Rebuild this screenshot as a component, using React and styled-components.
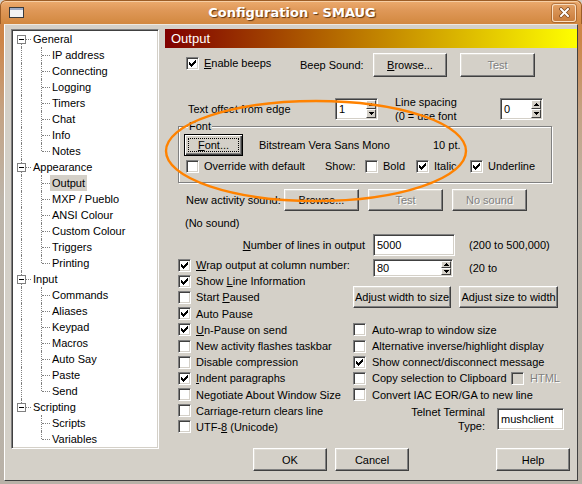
import React from 'react';
import styled, { createGlobalStyle, css } from 'styled-components';

const GlobalStyle = createGlobalStyle`
  html, body { margin: 0; padding: 0; background: #d4d0c8; }
  body { width: 582px; height: 484px; overflow: hidden; }
  * { box-sizing: border-box; }
`;

const FACE = '#d4d0c8';

const Window = styled.div`
  position: relative;
  width: 582px;
  height: 484px;
  display: flex;
  flex-direction: column;
  background: linear-gradient(to bottom, #d08444 0, #cd8547 40px, #c4a283 110px, #bdb5aa 200px, #b9b2a8 100%);
  border-radius: 6px 6px 0 0;
  overflow: hidden;
  font-family: "Liberation Sans", Arial, sans-serif;
  font-size: 11px;
  color: #000;
`;

const TitleBar = styled.div`
  height: 24px;
  flex-shrink: 0;
  display: flex;
  align-items: center;
  padding: 0 5px 0 8px;
  background: linear-gradient(to bottom, #ecab6e 0%, #df9858 40%, #d2883f 100%);
  border-radius: 6px 6px 0 0;
  border: 1px solid #9c5d26;
  border-bottom: none;
  box-shadow: inset 0 1px 0 rgba(255, 230, 200, 0.6);
`;

const TitleText = styled.div`
  flex: 1;
  text-align: center;
  padding-left: 8px;
  font-family: "DejaVu Sans", sans-serif;
  font-weight: bold;
  font-size: 13px;
  color: #fff;
  text-shadow: 1px 1px 1px rgba(70, 35, 5, 0.85);
`;

const CloseButton = styled.div`
  width: 24px;
  height: 18px;
  border-radius: 3px;
  border: 1px solid rgba(255, 236, 214, 0.85);
  box-shadow: 0 0 0 1px rgba(130, 70, 25, 0.5);
  background: linear-gradient(to bottom, #e19f63, #c97d3c);
  display: flex;
  align-items: center;
  justify-content: center;
`;

const Client = styled.div`
  flex: 1;
  margin: 0 4px 3px 4px;
  background: ${FACE};
  border-top: 1px solid #efe9e0;
  border-left: 1px solid #fff;
  border-right: 1px solid #404040;
  border-bottom: 1px solid #404040;
  display: flex;
  align-items: flex-start;
  gap: 6px;
  padding: 4px 0 0 6px;
`;

/* ---------- tree ---------- */

const Tree = styled.div`
  width: 148px;
  height: 420px;
  flex-shrink: 0;
  background: #fff;
  border: 1px solid;
  border-color: #808080 #fff #fff #808080;
  box-shadow: inset 1px 1px 0 #404040, inset -1px -1px 0 ${FACE};
  padding: 1px 0 0 1px;
`;

const TreeRow = styled.div`
  display: flex;
  height: 16px;
`;

const RootCell = styled.div`
  width: 18px;
  flex-shrink: 0;
  display: flex;
  flex-direction: column;
`;

const VSeg = styled.div`
  margin-left: 8px;
  width: 0;
  height: ${(p) => p.$h}px;
  border-left: 1px ${(p) => (p.$on ? 'dotted #808080' : 'solid transparent')};
`;

const BoxLine = styled.div`
  display: flex;
  align-items: center;
  height: 9px;
`;

const ExpandBox = styled.div`
  width: 9px;
  height: 9px;
  margin-left: 4px;
  border: 1px solid #808080;
  background: #fff;
  display: flex;
  align-items: center;
  justify-content: center;
`;

const Minus = styled.span`
  width: 5px;
  height: 1px;
  background: #000;
`;

const HSeg = styled.div`
  width: ${(p) => p.$w}px;
  height: 0;
  border-top: 1px dotted #808080;
`;

const ChildCell = styled.div`
  width: 19px;
  flex-shrink: 0;
  display: flex;
  align-items: flex-start;
`;

const VLine = styled.div`
  margin-left: 10px;
  width: 0;
  height: ${(p) => p.$h}px;
  border-left: 1px dotted #808080;
`;

const HLine = styled.div`
  width: 8px;
  height: 0;
  margin-top: 8px;
  border-top: 1px dotted #808080;
`;

const NodeLabel = styled.span`
  height: 16px;
  line-height: 16px;
  padding: 0 2px;
  white-space: nowrap;
  background: ${(p) => (p.$selected ? FACE : 'transparent')};
`;

/* ---------- right panel ---------- */

const Panel = styled.div`
  flex: 1;
  min-width: 0;
  display: flex;
  flex-direction: column;
`;

const Header = styled.div`
  height: 19px;
  flex-shrink: 0;
  background: linear-gradient(to right, #800000, #ffff00);
  color: #fff;
  font-size: 13px;
  line-height: 19px;
  padding-left: 6px;
`;

const Line = styled.div`
  display: flex;
  align-items: center;
  flex-shrink: 0;
  height: ${(p) => p.$h}px;
  margin-top: ${(p) => p.$mt || 0}px;
`;

const Label = styled.span`
  display: block;
  flex-shrink: 0;
  white-space: nowrap;
  line-height: 14px;
  margin-left: ${(p) => p.$ml || 0}px;
  width: ${(p) => (p.$w ? `${p.$w}px` : 'auto')};
  text-align: ${(p) => p.$align || 'left'};
  padding-right: ${(p) => p.$pr || 0}px;
  color: ${(p) => (p.$disabled ? '#808080' : '#000')};
  ${(p) => p.$disabled && css`text-shadow: 1px 1px 0 #fff;`}
`;

const Btn = styled.button`
  flex-shrink: 0;
  width: ${(p) => p.$w}px;
  height: ${(p) => p.$h || 23}px;
  margin-left: ${(p) => p.$ml || 0}px;
  padding: 0;
  font-family: "Liberation Sans", Arial, sans-serif;
  font-size: 11px;
  color: #000;
  background: ${FACE};
  border: 1px solid;
  border-color: #fff #404040 #404040 #fff;
  box-shadow: inset -1px -1px 0 #808080, inset 1px 1px 0 #dfdcd5;
  display: flex;
  align-items: center;
  justify-content: center;
  white-space: nowrap;
  ${(p) =>
    p.disabled &&
    css`
      color: #808080;
      text-shadow: 1px 1px 0 #fff;
    `}
  ${(p) =>
    p.$default &&
    css`
      border: 1px solid #000;
      box-shadow: inset 1px 1px 0 #fff, inset -1px -1px 0 #404040, inset -2px -2px 0 #808080;
    `}
`;

const Focus = styled.span`
  flex: 1;
  align-self: stretch;
  margin: 3px;
  border: 1px dotted #000;
  display: flex;
  align-items: center;
  justify-content: center;
`;

const CheckItem = styled.span`
  display: flex;
  align-items: center;
  flex-shrink: 0;
  white-space: nowrap;
  gap: ${(p) => (p.$gap == null ? 5 : p.$gap)}px;
  margin-left: ${(p) => p.$ml || 0}px;
  margin-top: ${(p) => p.$dy || 0}px;
  width: ${(p) => (p.$w ? `${p.$w}px` : 'auto')};
  color: ${(p) => (p.$disabled ? '#808080' : '#000')};
  ${(p) => p.$disabled && css`text-shadow: 1px 1px 0 #fff;`}
`;

const Box = styled.span`
  width: 13px;
  height: 13px;
  flex-shrink: 0;
  display: flex;
  align-items: center;
  justify-content: center;
  background: ${(p) => (p.$disabled ? FACE : '#fff')};
  border: 1px solid;
  border-color: #808080 #fff #fff #808080;
  box-shadow: inset 1px 1px 0 #404040, inset -1px -1px 0 ${FACE};
`;

const Field = styled.div`
  flex-shrink: 0;
  display: flex;
  width: ${(p) => p.$w}px;
  height: ${(p) => p.$h || 22}px;
  margin-left: ${(p) => p.$ml || 0}px;
  background: #fff;
  border: 1px solid;
  border-color: #808080 #fff #fff #808080;
  box-shadow: inset 1px 1px 0 #404040, inset -1px -1px 0 ${FACE};
`;

const FieldText = styled.span`
  flex: 1;
  align-self: center;
  padding-left: 3px;
  line-height: 14px;
  white-space: nowrap;
`;

const SpinButtons = styled.div`
  width: 10px;
  margin: 1px 1px 1px 0;
  display: flex;
  flex-direction: column;
`;

const SpinButton = styled.div`
  flex: 1;
  background: ${FACE};
  border: 1px solid;
  border-color: #fff #404040 #404040 #fff;
  display: flex;
  align-items: center;
  justify-content: center;
`;

const Group = styled.fieldset`
  flex-shrink: 0;
  margin: 0 0 0 13px;
  width: 374px;
  min-width: 0;
  padding: 1px 0 9px 5px;
  border: 1px solid #808080;
  box-shadow: inset 1px 1px 0 #fff, 1px 1px 0 #fff;
`;

const GroupLegend = styled.legend`
  margin-left: 4px;
  padding: 0 1px;
  line-height: 13px;
  font-size: 11px;
  background: ${FACE};
`;

const OptionsGrid = styled.div`
  flex-shrink: 0;
  margin-top: 1px;
  padding-left: 13px;
  display: grid;
  grid-template-columns: 175px 1fr;
  grid-template-rows: repeat(11, 16.2px);
`;

const Cell = styled.div`
  grid-column: ${(p) => p.$col};
  grid-row: ${(p) => p.$row};
  display: flex;
  align-items: ${(p) => p.$align || 'center'};
  padding-top: ${(p) => p.$pt || 0}px;
`;

const Overlay = styled.svg`
  position: absolute;
  left: 0;
  top: 0;
  width: 582px;
  height: 484px;
  pointer-events: none;
`;

/* ---------- small drawings ---------- */

const Tick = () => (
  <svg width="7" height="7" viewBox="0 0 7 7" shapeRendering="crispEdges">
    <path
      fill="#000"
      d="M6 0h1v1h-1z M5 1h2v1h-2z M0 2h1v1h-1z M4 2h3v1h-3z M0 3h2v1h-2z M3 3h3v1h-3z M0 4h5v1h-5z M1 5h3v1h-3z M2 6h1v1h-1z"
    />
  </svg>
);

const Arrow = ({ down }) => (
  <svg width="5" height="3" viewBox="0 0 5 3" shapeRendering="crispEdges">
    <path fill="#000" d={down ? 'M0 0h5v1h-5z M1 1h3v1h-3z M2 2h1v1h-1z' : 'M2 0h1v1h-1z M1 1h3v1h-3z M0 2h5v1h-5z'} />
  </svg>
);

const Check = ({ on, disabled, children, ml, w, gap, dy }) => (
  <CheckItem $ml={ml} $w={w} $gap={gap} $dy={dy} $disabled={disabled}>
    <Box $disabled={disabled}>{on && <Tick />}</Box>
    <span>{children}</span>
  </CheckItem>
);

const Spin = ({ value, w, h, ml }) => (
  <Field $w={w} $h={h} $ml={ml}>
    <FieldText>{value}</FieldText>
    <SpinButtons>
      <SpinButton>
        <Arrow />
      </SpinButton>
      <SpinButton>
        <Arrow down />
      </SpinButton>
    </SpinButtons>
  </Field>
);

const TREE = [
  { label: 'General', children: ['IP address', 'Connecting', 'Logging', 'Timers', 'Chat', 'Info', 'Notes'] },
  { label: 'Appearance', children: ['Output', 'MXP / Pueblo', 'ANSI Colour', 'Custom Colour', 'Triggers', 'Printing'] },
  { label: 'Input', children: ['Commands', 'Aliases', 'Keypad', 'Macros', 'Auto Say', 'Paste', 'Send'] },
  { label: 'Scripting', children: ['Scripts', 'Variables'] },
];

const LEFT_OPTIONS = [
  { on: true, text: (<><u>W</u>rap output at column number:</>) },
  { on: true, text: (<>Show <u>L</u>ine Information</>) },
  { on: false, text: (<>Start <u>P</u>aused</>) },
  { on: true, text: 'Auto Pause' },
  { on: true, text: (<><u>U</u>n-Pause on send</>) },
  { on: false, text: 'New activity flashes taskbar' },
  { on: false, text: 'Disable compression' },
  { on: true, text: (<><u>I</u>ndent paragraphs</>) },
  { on: false, text: 'Negotiate About Window Size' },
  { on: false, text: 'Carriage-return clears line' },
  { on: false, text: (<>UTF-<u>8</u> (Unicode)</>) },
];

export default function App() {
  return (
    <>
      <GlobalStyle />
      <Window>
        <TitleBar>
          <svg width="15" height="11" viewBox="0 0 15 11">
            <rect x="0.5" y="0.5" width="14" height="10" fill="#f2f2f2" stroke="#3b3b3b" />
            <rect x="1" y="1" width="13" height="2" fill="#9eabc6" />
          </svg>
          <TitleText>Configuration - SMAUG</TitleText>
          <CloseButton>
            <svg width="11" height="11" viewBox="0 0 11 11">
              <path d="M2 2 L9 9 M9 2 L2 9" stroke="#7a4216" strokeWidth="3.4" strokeLinecap="square" />
              <path d="M2 2 L9 9 M9 2 L2 9" stroke="#fff" strokeWidth="2" strokeLinecap="square" />
            </svg>
          </CloseButton>
        </TitleBar>

        <Client>
          <Tree>
            {TREE.map((g, gi) => {
              const first = gi === 0;
              const last = gi === TREE.length - 1;
              return (
                <React.Fragment key={g.label}>
                  <TreeRow>
                    <RootCell>
                      <VSeg $h={4} $on={!first} />
                      <BoxLine>
                        <ExpandBox>
                          <Minus />
                        </ExpandBox>
                        <HSeg $w={5} />
                      </BoxLine>
                      <VSeg $h={3} $on={!last} />
                    </RootCell>
                    <NodeLabel>{g.label}</NodeLabel>
                  </TreeRow>
                  {g.children.map((c, ci) => (
                    <TreeRow key={c}>
                      <RootCell>
                        <VSeg $h={16} $on={!last} />
                      </RootCell>
                      <ChildCell>
                        <VLine $h={ci === g.children.length - 1 ? 8 : 16} />
                        <HLine />
                      </ChildCell>
                      <NodeLabel $selected={c === 'Output'}>{c}</NodeLabel>
                    </TreeRow>
                  ))}
                </React.Fragment>
              );
            })}
          </Tree>

          <Panel>
            <Header>Output</Header>

            <Line $h={24} $mt={5}>
              <Check on ml={21} w={114} dy={-4}>
                <u>E</u>nable beeps
              </Check>
              <Label $w={73}>Beep Sound:</Label>
              <Btn $w={74} $h={24}>
                <u>B</u>rowse...
              </Btn>
              <Btn $w={75} $h={24} $ml={13} disabled>
                Test
              </Btn>
            </Line>

            <Line $h={23} $mt={20}>
              <Label $ml={23} $w={147}>Text offset from edge</Label>
              <Spin value="1" w={43} h={22} />
              <Label $ml={17} $w={105}>
                Line spacing
                <br />
                (0 = use font
              </Label>
              <Spin value="0" w={43} h={22} />
            </Line>

            <Group>
              <GroupLegend>Font</GroupLegend>
              <Line $h={22}>
                <Btn $w={59} $h={22} $default>
                  <Focus>
                    <u>F</u>ont...
                  </Focus>
                </Btn>
                <Label $ml={16} $w={174}>Bitstream Vera Sans Mono</Label>
                <Label>10 pt.</Label>
              </Line>
              <Line $h={14} $mt={3}>
                <Check ml={2} w={139}>Override with default</Check>
                <Label $w={40}>Show:</Label>
                <Check w={51}>Bold</Check>
                <Check on w={54}>Italic</Check>
                <Check on>Underline</Check>
              </Line>
            </Group>

            <Line $h={22} $mt={6}>
              <Label $ml={21} $w={98}>New activity sound:</Label>
              <Btn $w={75} $h={22}>Browse...</Btn>
              <Btn $w={75} $h={22} $ml={9} disabled>
                Test
              </Btn>
              <Btn $w={75} $h={22} $ml={9} disabled>
                No sound
              </Btn>
            </Line>

            <Line $h={14} $mt={5}>
              <Label $ml={20}>(No sound)</Label>
            </Line>

            <Line $h={22} $mt={4}>
              <Label $ml={13} $w={195} $align="right" $pr={8}>
                <u>N</u>umber of lines in output
              </Label>
              <Field $w={82} $h={22}>
                <FieldText>5000</FieldText>
              </Field>
              <Label $ml={14}>(200 to 500,000)</Label>
            </Line>

            <OptionsGrid>
              {LEFT_OPTIONS.map((o, i) => (
                <Cell key={i} $col={1} $row={i + 1}>
                  <Check on={o.on}>{o.text}</Check>
                </Cell>
              ))}

              <Cell $col={2} $row={1} $align="flex-start" $pt={2}>
                <Line $h={18}>
                  <Spin value="80" w={80} h={18} ml={20} />
                  <Label $ml={16}>(20 to</Label>
                </Line>
              </Cell>

              <Cell $col={2} $row="2 / 5">
                <Btn $w={98} $h={22}>Adjust width to size</Btn>
                <Btn $w={99} $h={22} $ml={8}>
                  Adjust size to width
                </Btn>
              </Cell>

              <Cell $col={2} $row={5}>
                <Check gap={6}>Auto-wrap to window size</Check>
              </Cell>
              <Cell $col={2} $row={6}>
                <Check gap={6}>Alternative inverse/highlight display</Check>
              </Cell>
              <Cell $col={2} $row={7}>
                <Check on gap={6}>Show connect/disconnect message</Check>
              </Cell>
              <Cell $col={2} $row={8}>
                <Check gap={6} w={158}>
                  Copy selection to Clipboard
                </Check>
                <Check gap={6} disabled>
                  HTML
                </Check>
              </Cell>
              <Cell $col={2} $row={9}>
                <Check gap={6}>Convert IAC EOR/GA to new line</Check>
              </Cell>

              <Cell $col={2} $row="10 / 12">
                <Label $w={132} $align="right">
                  Telnet Terminal
                  <br />
                  Type:
                </Label>
                <Field $w={67} $h={22} $ml={12}>
                  <FieldText>mushclient</FieldText>
                </Field>
              </Cell>
            </OptionsGrid>

            <Line $h={23} $mt={13}>
              <Btn $w={74} $h={23} $ml={88}>
                OK
              </Btn>
              <Btn $w={74} $h={23} $ml={8}>
                Cancel
              </Btn>
              <Btn $w={74} $h={23} $ml={87}>
                Help
              </Btn>
            </Line>
          </Panel>
        </Client>

        <Overlay viewBox="0 0 582 484">
          <ellipse cx="316" cy="151" rx="150" ry="50" fill="none" stroke="#ff8200" strokeWidth="2.4" />
        </Overlay>
      </Window>
    </>
  );
}
